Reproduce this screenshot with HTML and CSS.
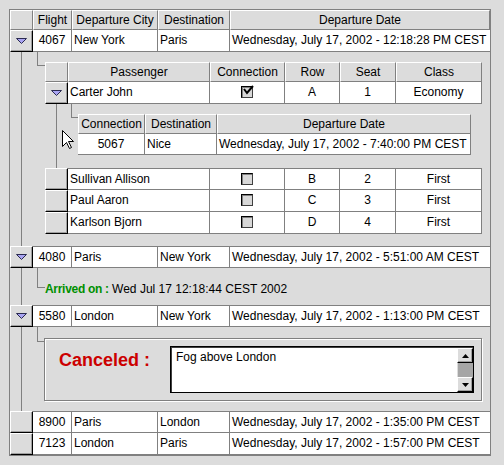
FILE: index.html
```html
<!DOCTYPE html>
<html lang="en">
<head>
    <meta charset="UTF-8">
    <title>Flights</title>
    <link rel="stylesheet" href="styles.css">
</head>
<body>
    <div class="frame">
        <!-- Flights header -->
        <div class="row head main-cols">
            <div class="hcell"></div>
            <div class="hcell">Flight</div>
            <div class="hcell">Departure City</div>
            <div class="hcell">Destination</div>
            <div class="hcell">Departure Date</div>
        </div>

        <div class="row main-cols">
            <div class="rh"><svg class="tri" width="11" height="6"><polygon points="0.5,0.5 10.5,0.5 5.5,5.5"/></svg></div>
            <div class="cell c">4067</div>
            <div class="cell">New York</div>
            <div class="cell">Paris</div>
            <div class="cell">Wednesday, July 17, 2002 - 12:18:28 PM CEST</div>
        </div>
        <div class="expand">
            <div class="gutter"></div>
            <div class="detail d-table">
                <div class="elbow"></div>
                <div class="sub">
                    <div class="row head sub-cols">
                        <div class="hcell"></div>
                        <div class="hcell">Passenger</div>
                        <div class="hcell">Connection</div>
                        <div class="hcell">Row</div>
                        <div class="hcell">Seat</div>
                        <div class="hcell">Class</div>
                    </div>
                    <div class="row sub-cols">
                        <div class="rh"><svg class="tri" width="11" height="6"><polygon points="0.5,0.5 10.5,0.5 5.5,5.5"/></svg></div>
                        <div class="cell">Carter John</div>
                        <div class="cell c"><span class="check"><svg width="12" height="11"><polyline points="2,4 5,8 11,1"/></svg></span></div>
                        <div class="cell c">A</div>
                        <div class="cell c">1</div>
                        <div class="cell c">Economy</div>
                    </div>
                    <div class="expand">
                        <div class="gutter"></div>
                        <div class="detail d-inner">
                            <div class="elbow"></div>
                            <div class="sub2">
                                <div class="row head sub2-cols">
                                    <div class="hcell">Connection</div>
                                    <div class="hcell">Destination</div>
                                    <div class="hcell">Departure Date</div>
                                </div>
                                <div class="row short sub2-cols">
                                    <div class="cell c">5067</div>
                                    <div class="cell">Nice</div>
                                    <div class="cell">Wednesday, July 17, 2002 - 7:40:00 PM CEST</div>
                                </div>
                            </div>
                        </div>
                    </div>
                    <div class="row top-line sub-cols">
                        <div class="rh"></div>
                        <div class="cell">Sullivan Allison</div>
                        <div class="cell c"><span class="check"></span></div>
                        <div class="cell c">B</div>
                        <div class="cell c">2</div>
                        <div class="cell c">First</div>
                    </div>
                    <div class="row sub-cols">
                        <div class="rh"></div>
                        <div class="cell">Paul Aaron</div>
                        <div class="cell c"><span class="check"></span></div>
                        <div class="cell c">C</div>
                        <div class="cell c">3</div>
                        <div class="cell c">First</div>
                    </div>
                    <div class="row sub-cols">
                        <div class="rh"></div>
                        <div class="cell">Karlson Bjorn</div>
                        <div class="cell c"><span class="check"></span></div>
                        <div class="cell c">D</div>
                        <div class="cell c">4</div>
                        <div class="cell c">First</div>
                    </div>
                </div>
            </div>
        </div>

        <div class="row top-line main-cols">
            <div class="rh"><svg class="tri" width="11" height="6"><polygon points="0.5,0.5 10.5,0.5 5.5,5.5"/></svg></div>
            <div class="cell c">4080</div>
            <div class="cell">Paris</div>
            <div class="cell">New York</div>
            <div class="cell">Wednesday, July 17, 2002 - 5:51:00 AM CEST</div>
        </div>
        <div class="expand">
            <div class="gutter"></div>
            <div class="detail d-arrived">
                <div class="elbow"></div>
                <div class="arrived"><strong>Arrived on :</strong> Wed Jul 17 12:18:44 CEST 2002</div>
            </div>
        </div>

        <div class="row top-line main-cols">
            <div class="rh"><svg class="tri" width="11" height="6"><polygon points="0.5,0.5 10.5,0.5 5.5,5.5"/></svg></div>
            <div class="cell c">5580</div>
            <div class="cell">London</div>
            <div class="cell">New York</div>
            <div class="cell">Wednesday, July 17, 2002 - 1:13:00 PM CEST</div>
        </div>
        <div class="expand">
            <div class="gutter"></div>
            <div class="detail d-panel">
                <div class="elbow"></div>
                <div class="panel">
                    <div class="canceled">Canceled :</div>
                    <div class="note">
                        <div class="note-text">Fog above London</div>
                        <div class="vscroll">
                            <div class="sbtn"><svg width="7" height="4"><polygon points="3.5,0 7,4 0,4"/></svg></div>
                            <div class="track"></div>
                            <div class="sbtn"><svg width="7" height="4"><polygon points="0,0 7,0 3.5,4"/></svg></div>
                        </div>
                    </div>
                </div>
            </div>
        </div>

        <div class="row top-line main-cols">
            <div class="rh"></div>
            <div class="cell c">8900</div>
            <div class="cell">Paris</div>
            <div class="cell">London</div>
            <div class="cell">Wednesday, July 17, 2002 - 1:35:00 PM CEST</div>
        </div>
        <div class="row main-cols">
            <div class="rh"></div>
            <div class="cell c">7123</div>
            <div class="cell">London</div>
            <div class="cell">Paris</div>
            <div class="cell">Wednesday, July 17, 2002 - 1:57:00 PM CEST</div>
        </div>
    </div>

    <!-- mouse pointer -->
    <svg class="pointer" width="13" height="20"><polygon points="0.5,0.5 0.5,16.5 4.5,12.5 7.5,18.5 9.5,17.5 6.5,11.5 11.5,11.5"/></svg>
</body>
</html>
```

FILE: styles.css
```css
/* Genel */
body {
    margin: 0;
    padding: 9px;
    background-color: #dcdcdc;
    font-family: "Liberation Sans", Arial, sans-serif;
    font-size: 12px;
    color: #000;
}

.frame {
    box-sizing: border-box;
    width: 482px;
    border: 1px solid #808080;
}

/* Satirlar */
.row {
    display: grid;
    height: 22px;
}

.row.head {
    height: 20px;
}

.row.short {
    height: 21px;
}

.main-cols {
    grid-template-columns: 23px 39px 86px 72px 260px;
}

.sub-cols {
    grid-template-columns: 23px 142px 75px 55px 56px 86px;
}

.sub2-cols {
    grid-template-columns: 67px 72px 254px;
}

.hcell {
    box-sizing: border-box;
    background-color: #dcdcdc;
    border-top: 1px solid #fff;
    border-left: 1px solid #fff;
    border-right: 1px solid #808080;
    border-bottom: 1px solid #808080;
    text-align: center;
    line-height: 18px;
    white-space: nowrap;
    overflow: hidden;
}

.cell {
    box-sizing: border-box;
    background-color: #fff;
    border-right: 1px solid #808080;
    border-bottom: 1px solid #808080;
    padding: 0 2px;
    line-height: 21px;
    white-space: nowrap;
    overflow: hidden;
}

.cell.c {
    text-align: center;
}

.main-cols > .cell:last-child {
    border-right: none;
}

.top-line > .cell {
    border-top: 1px solid #808080;
    line-height: 20px;
}

.row.short > .cell {
    line-height: 20px;
}

/* Satir basi dugmeleri */
.rh {
    box-sizing: border-box;
    background-color: #dcdcdc;
    border: 1px solid;
    border-color: #fff #000 #000 #fff;
    box-shadow: inset -1px -1px #a0a0a0;
    display: flex;
    align-items: center;
    justify-content: center;
}

.tri polygon {
    fill: #a9a4f2;
    stroke: #2a2a50;
    stroke-width: 1;
}

.check {
    display: inline-block;
    box-sizing: border-box;
    width: 12px;
    height: 12px;
    margin-top: 4px;
    vertical-align: top;
    border: 1px solid #000;
    border-right-color: #404040;
    border-bottom-color: #404040;
    background-color: #d8d8d8;
    box-shadow: inset 1px 1px #808080;
    position: relative;
}

.check svg {
    position: absolute;
    left: 0;
    top: -2px;
}

.check polyline {
    fill: none;
    stroke: #000;
    stroke-width: 2;
}

/* Acilan detay alanlari */
.expand {
    display: flex;
}

.gutter {
    flex: none;
    width: 23px;
    background: linear-gradient(#808080, #808080) no-repeat 11px 0 / 1px 100%;
}

.detail {
    flex: 1;
    display: flex;
    align-items: flex-start;
}

.elbow {
    flex: none;
    box-sizing: border-box;
    width: 8px;
    margin-left: 4px;
    border-left: 1px solid #808080;
    border-bottom: 1px solid #808080;
}

.d-table {
    padding: 10px 0 12px;
}

.d-table > .elbow {
    height: 14px;
    margin-top: -10px;
}

.d-inner {
    padding: 10px 0 13px;
}

.d-inner > .elbow {
    width: 7px;
    margin-left: 3px;
    height: 14px;
    margin-top: -10px;
}

.d-arrived {
    padding: 13px 0 8px;
}

.d-arrived > .elbow {
    height: 20px;
    margin-top: -13px;
}

.d-panel {
    padding: 11px 0 10px;
}

.d-panel > .elbow {
    height: 15px;
    margin-top: -11px;
}

.arrived {
    line-height: 16px;
    white-space: nowrap;
}

.arrived strong {
    color: #009000;
    letter-spacing: -0.3px;
}

/* Iptal paneli */
.panel {
    display: flex;
    align-items: flex-start;
    box-sizing: border-box;
    width: 438px;
    margin-left: -1px;
    padding: 7px 7px 7px 14px;
    border: 1px solid #808080;
    box-shadow: inset 1px 1px #fff, 1px 1px #fff;
}

.canceled {
    width: 111px;
    margin-top: 3px;
    color: #cc0000;
    font-size: 18px;
    font-weight: bold;
    line-height: 22px;
}

.note {
    display: flex;
    box-sizing: border-box;
    width: 304px;
    height: 47px;
    border: 1px solid #000;
    box-shadow: inset 1px 1px #404040;
    background-color: #fff;
}

.note-text {
    flex: 1;
    padding: 3px 5px;
    line-height: 14px;
}

.vscroll {
    display: flex;
    flex-direction: column;
    width: 16px;
    margin: 1px 0 0;
}

.sbtn {
    box-sizing: border-box;
    height: 15px;
    background-color: #dcdcdc;
    border: 1px solid;
    border-color: #fff #000 #000 #fff;
    box-shadow: inset -1px -1px #a0a0a0;
    display: flex;
    align-items: center;
    justify-content: center;
}

.sbtn polygon {
    fill: #000;
}

.track {
    flex: 1;
    background-color: #a6a6a6;
    border-left: 1px solid #dcdcdc;
}

.pointer {
    position: absolute;
    left: 62px;
    top: 130px;
}

.pointer polygon {
    fill: #fff;
    stroke: #000;
    stroke-width: 1;
}
```
